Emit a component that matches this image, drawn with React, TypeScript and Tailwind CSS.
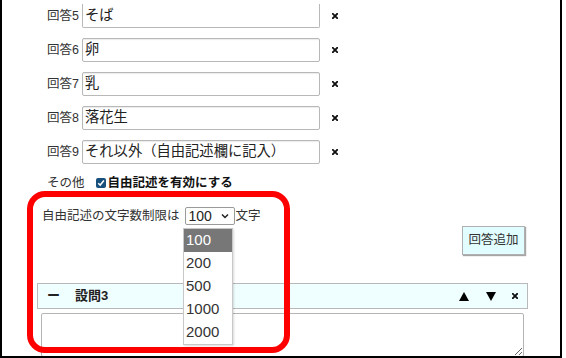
const answers = [
  { no: 5, text: "そば" },
  { no: 6, text: "卵" },
  { no: 7, text: "乳" },
  { no: 8, text: "落花生" },
  { no: 9, text: "それ以外（自由記述欄に記入）" },
];

const limits = ["100", "200", "500", "1000", "2000"];

function Cross({ size = 6 }: { size?: number }) {
  return (
    <svg width={size} height={size} viewBox="0 0 6 6" className="block">
      <path d="M0.8 0.8 L5.2 5.2 M5.2 0.8 L0.8 5.2" stroke="#111" strokeWidth="1.9" strokeLinecap="square" />
    </svg>
  );
}

function AnswerRow({ no, text, first }: { no: number; text: string; first?: boolean }) {
  return (
    <div className="flex items-center h-[24px]">
      <span className="w-[77px] text-right text-[12.5px] text-[#333]">回答{no}</span>
      <div
        className={
          first
            ? "ml-[3px] w-[238px] h-[24px] border-x border-b border-[#b8b8b8] rounded-b-[2px] flex items-center pl-[2px] pt-[1px] text-[14.3px] text-[#222]"
            : "ml-[3px] w-[238px] h-[24px] border border-[#b8b8b8] rounded-[2px] shadow-[inset_0_1px_1px_rgba(0,0,0,0.08)] flex items-center pl-[2px] text-[14.3px] text-[#222]"
        }
      >
        {text}
      </div>
      <span className="ml-[12px]">
        <Cross />
      </span>
    </div>
  );
}

export default function App() {
  return (
    <div className="w-[566px] h-[358px] bg-white overflow-hidden">
      <div
        className="relative w-[562px] h-[358px] border-l-2 border-r-2 border-b-2 border-black overflow-hidden bg-white"
        style={{ fontFamily: '"Liberation Sans", "Noto Sans CJK JP", sans-serif' }}
      >
        {/* answers (list continues above the visible area) */}
        <div className="flex flex-col gap-[10px] mt-[4px]">
          {answers.map((a, i) => (
            <AnswerRow key={a.no} no={a.no} text={a.text} first={i === 0} />
          ))}
        </div>

        <div className="flex items-center h-[16px] mt-[11px] ml-[45px] text-[12.5px] text-[#333]">
          <span>その他</span>
          <span className="ml-[11px] w-[10px] h-[10px] rounded-[2px] bg-[#17507c] flex items-center justify-center">
            <svg width="8" height="8" viewBox="0 0 8 8">
              <path d="M1.2 4.2 L3.2 6.1 L6.9 1.6" stroke="white" strokeWidth="1.5" fill="none" />
            </svg>
          </span>
          <span className="ml-[2px] font-bold text-[#111]">自由記述を有効にする</span>
        </div>

        <div className="flex items-center h-[18px] mt-[16px] ml-[40px] text-[12.5px] text-[#333]">
          <span>自由記述の文字数制限は</span>
          <div className="ml-[5px] w-[50px] h-[18px] border border-[#9a9a9a] rounded-[2px] flex items-center pl-[3px] text-[14px] text-[#222]">
            <span>100</span>
            <svg width="8" height="6" viewBox="0 0 8 6" className="ml-auto mr-[5px]">
              <path d="M1 1.5 L4 4.5 L7 1.5" stroke="#222" strokeWidth="1.5" fill="none" />
            </svg>
          </div>
          <span className="ml-[1px]">文字</span>
        </div>

        <div className="flex justify-end pr-[35px] mt-[1px]">
          <button className="w-[63px] h-[29px] bg-[#e2fdff] border border-[#b0b0b0] shadow-[1px_1px_1px_rgba(0,0,0,0.35)] text-[12.5px] text-[#333]">
            回答追加
          </button>
        </div>

        <div className="mt-[28px] ml-[35px] w-[491px] h-[26px] bg-[#effeff] border border-[#b9b9b9] flex items-center pl-[9px] pr-[9px]">
          <span className="text-[13px] font-bold text-[#222] w-[10px]">ー</span>
          <span className="ml-[18px] text-[13px] font-bold text-[#222]">設問3</span>
          <div className="ml-auto flex items-center">
            <svg width="10" height="9" viewBox="0 0 10 9">
              <path d="M5 0 L10 9 L0 9 Z" fill="#000" />
            </svg>
            <svg width="10" height="9" viewBox="0 0 10 9" className="ml-[17px]">
              <path d="M0 0 L10 0 L5 9 Z" fill="#000" />
            </svg>
            <span className="ml-[16px]">
              <Cross />
            </span>
          </div>
        </div>

        <textarea
          className="block mt-[4px] ml-[39px] w-[483px] h-[44px] border border-[#b5b5b5] rounded-[2px] outline-none"
          readOnly
        />

        {/* open select list */}
        <div className="absolute left-[181px] top-[228px] w-[50px] h-[117px] bg-white border border-[#c8c8c8] shadow-[1px_1px_2px_rgba(0,0,0,0.15)] flex flex-col">
          {limits.map((v, i) => (
            <div
              key={v}
              className={
                i === 0
                  ? "h-[23.4px] flex items-center pl-[2px] text-[15px] bg-[#777777] text-white"
                  : "h-[23.4px] flex items-center pl-[2px] text-[15px] text-[#333]"
              }
            >
              {v}
            </div>
          ))}
        </div>

        {/* red highlight */}
        <div className="absolute left-[25px] top-[191px] w-[263px] h-[162px] border-[6px] border-[#ff0000] rounded-[18px] pointer-events-none" />
      </div>
    </div>
  );
}
